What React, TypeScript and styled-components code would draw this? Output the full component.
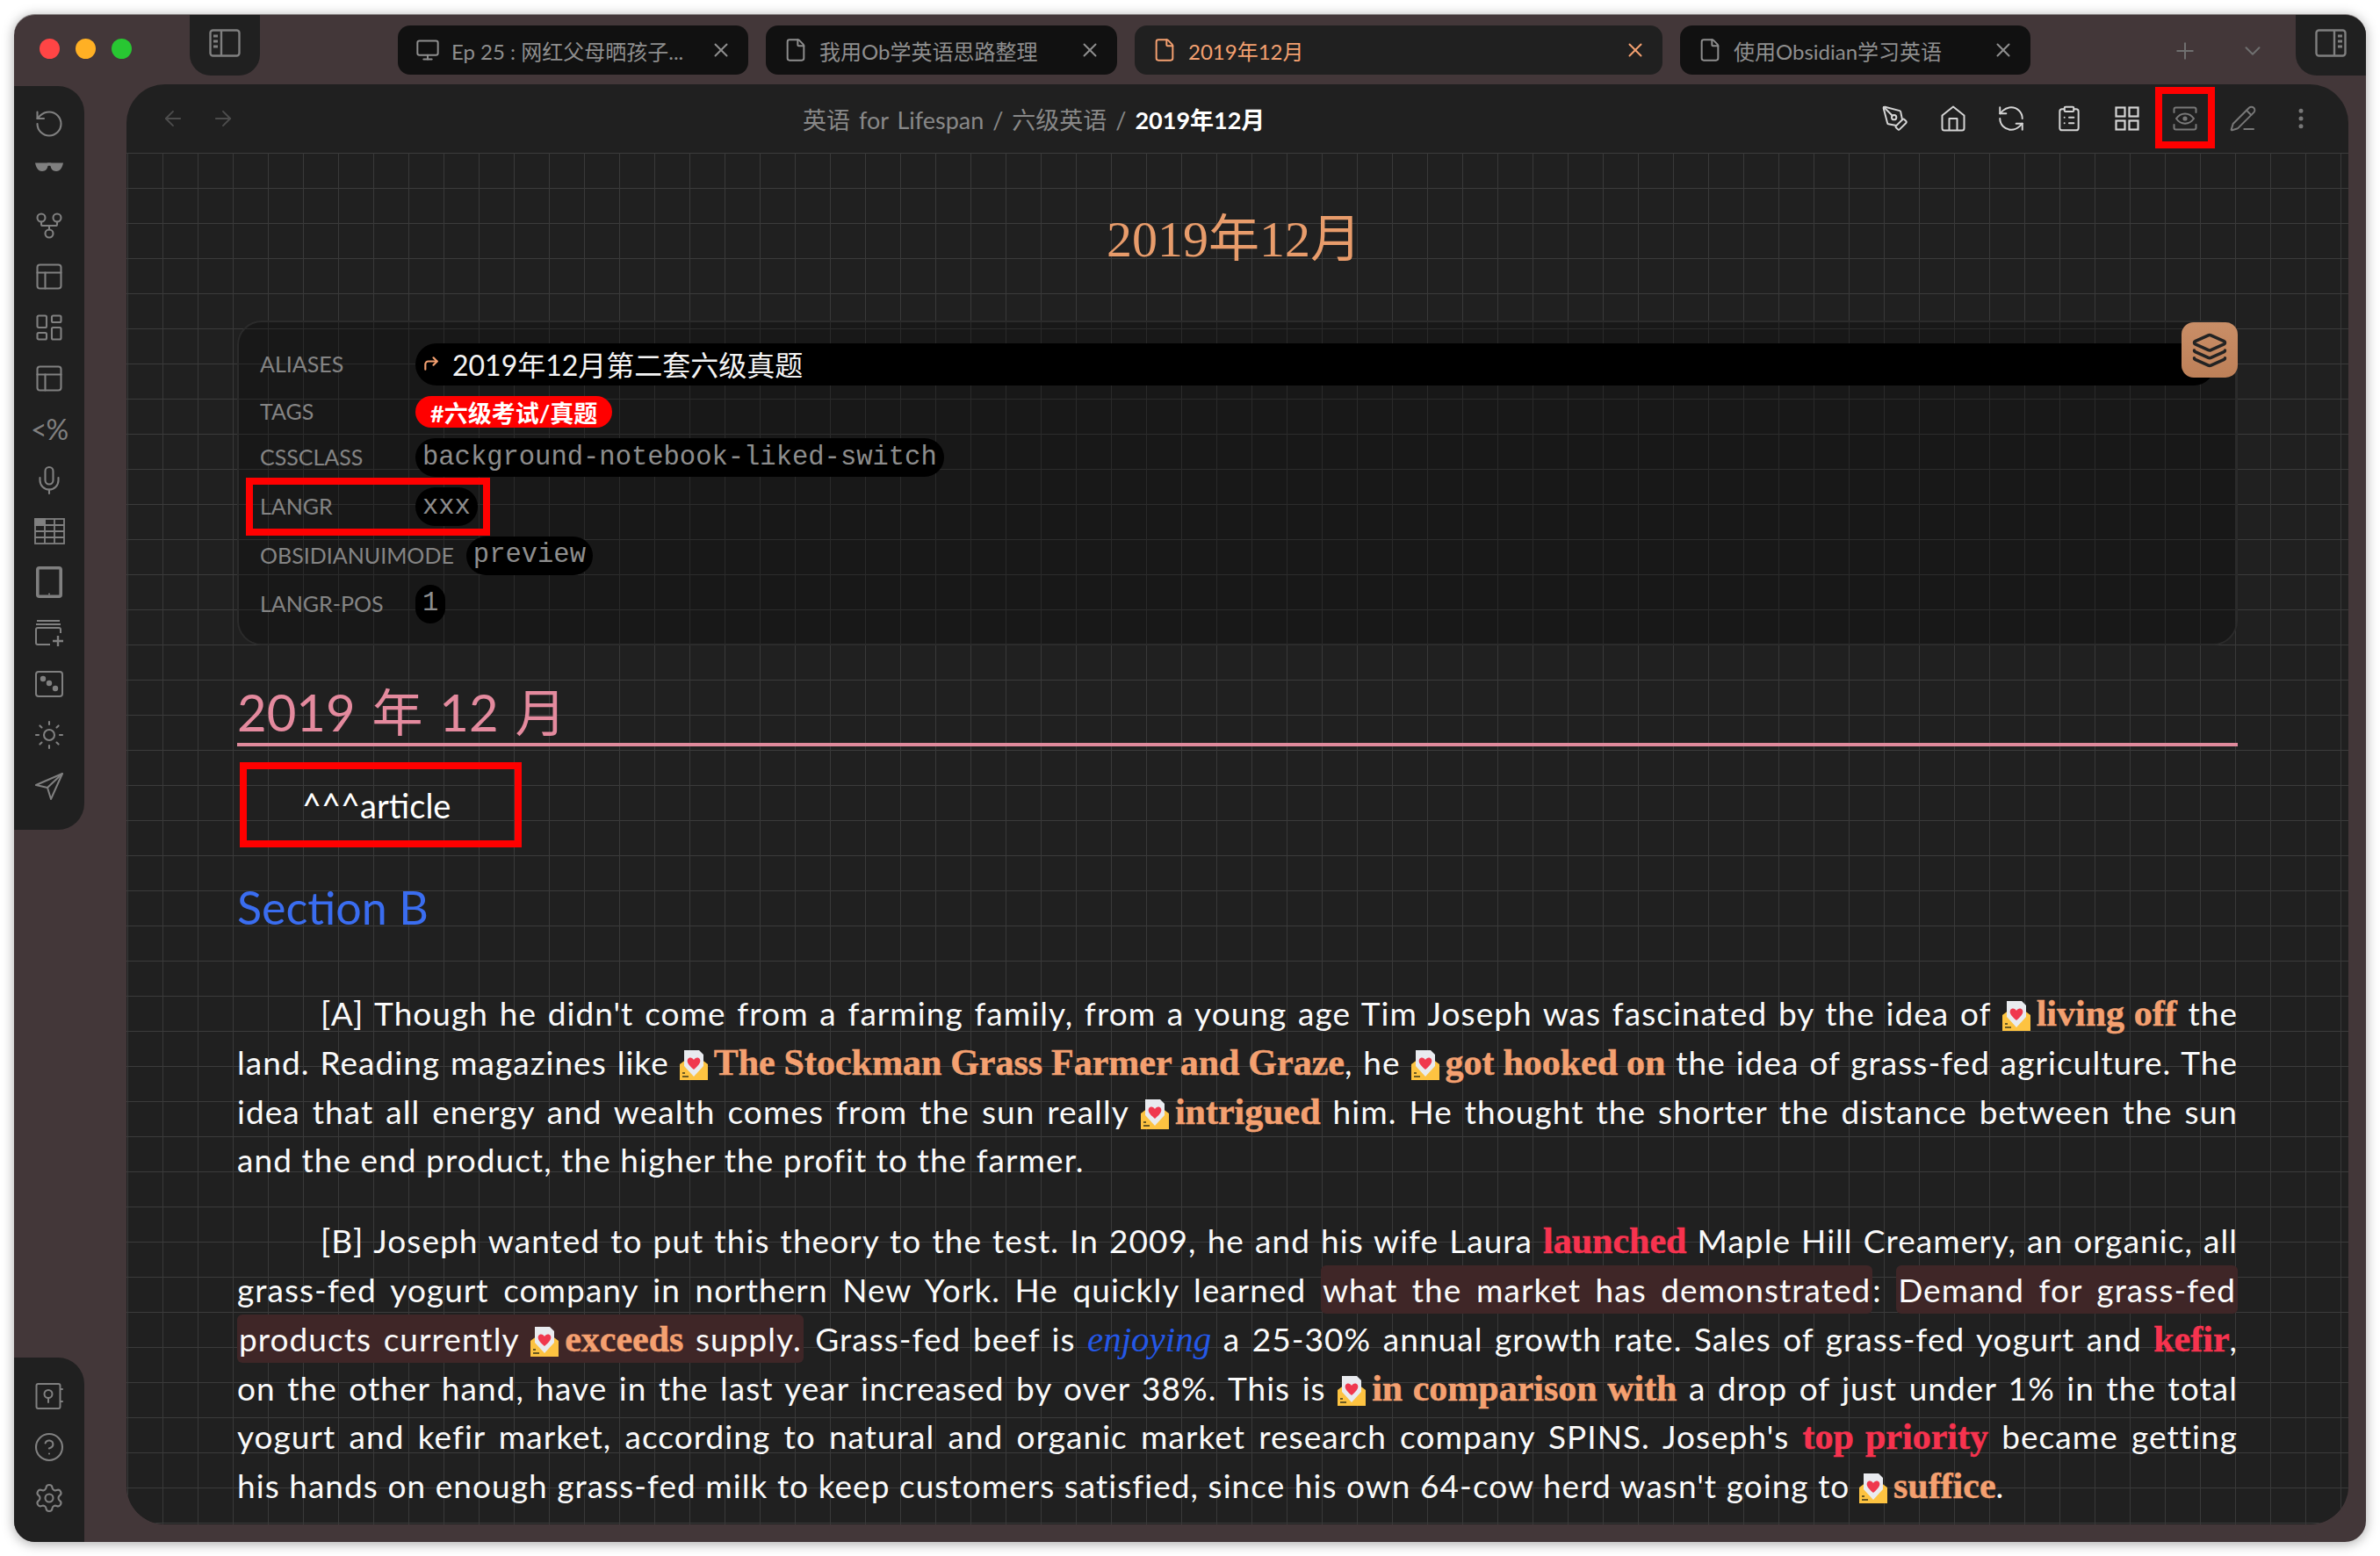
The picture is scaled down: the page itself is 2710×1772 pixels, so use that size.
import React from "react";
import styled, { createGlobalStyle } from "styled-components";
import {
  RotateCcw, GitFork, PanelsTopLeft, LayoutDashboard, Mic, Sun, Settings, CircleHelp,
  PenTool, RefreshCcw, ClipboardList, PencilLine, MoreVertical, ArrowLeft, ArrowRight,
  X, Plus, ChevronDown, Monitor, File, CornerUpRight, Layers,
} from "lucide-react";

const SANS = `Lato, "Noto Sans CJK SC", sans-serif`;
const BOLD_SERIF = `"Liberation Serif", "Noto Sans CJK SC", serif`;
const MONO = `"Liberation Mono", monospace`;

const GlobalStyle = createGlobalStyle`
  * { box-sizing: border-box; }
  html, body { margin: 0; padding: 0; background: #fff; }
  body { font-family: ${SANS}; }
`;

const Page = styled.div`
  width: 2710px;
  height: 1772px;
  padding: 16px;
  overflow: hidden;
  background: #fff;
`;

const Window = styled.div`
  width: 2678px;
  height: 1740px;
  display: flex;
  flex-direction: column;
  background: #433739;
  border-top: 1px solid #8b8686;
  border-radius: 24px;
  overflow: hidden;
  box-shadow: 0 2px 14px rgba(0, 0, 0, 0.35);
`;

/* title bar */
const TitleBar = styled.div`
  height: 79px;
  flex: none;
  display: flex;
  align-items: flex-start;
`;

const Lights = styled.div`
  width: 200px;
  height: 79px;
  padding: 0 0 0 29px;
  display: flex;
  align-items: center;
  gap: 18px;
  margin-top: -1px;
`;

const Light = styled.span<{ $c: string }>`
  width: 23px;
  height: 23px;
  border-radius: 50%;
  background: ${(p) => p.$c};
`;

const SideToggle = styled.div<{ $right?: boolean }>`
  width: 80px;
  height: 69px;
  flex: none;
  display: flex;
  align-items: center;
  justify-content: center;
  padding-bottom: 6px;
  background: #202020;
  color: #7f7f7f;
  border-radius: ${(p) => (p.$right ? "0 0 0 24px" : "0 0 24px 24px")};
  margin-left: ${(p) => (p.$right ? "auto" : "0")};
`;

const Tabs = styled.div`
  display: flex;
  gap: 20px;
  margin: 12px 0 0 157px;
`;

const Tab = styled.div<{ $w: number; $active?: boolean }>`
  width: ${(p) => p.$w}px;
  height: 56px;
  padding: 0 18px 0 20px;
  display: flex;
  align-items: center;
  border-radius: 14px;
  background: ${(p) => (p.$active ? "#202020" : "#111111")};
  color: ${(p) => (p.$active ? "#f4a070" : "#8e8e8e")};
  font-size: 24px;
  white-space: nowrap;
`;

const TabLabel = styled.span`
  margin-left: 13px;
  flex: 1;
`;

const TabTools = styled.div`
  display: flex;
  align-items: center;
  gap: 47px;
  margin: 26px 0 0 161px;
  color: #6f6f6f;
`;

/* body */
const Body = styled.div`
  flex: 1;
  min-height: 0;
  display: flex;
  padding-bottom: 20px;
`;

const RailColumn = styled.div`
  width: 80px;
  flex: none;
  margin-bottom: -20px;
  padding-top: 2px;
  display: flex;
  flex-direction: column;
  justify-content: space-between;
`;

const Rail = styled.div<{ $bottom?: boolean }>`
  display: flex;
  flex-direction: column;
  padding: ${(p) => (p.$bottom ? "15px 0 21px" : "14px 0 21px")};
  background: #202020;
  color: #808080;
  border-radius: ${(p) => (p.$bottom ? "0 30px 0 0" : "0 30px 30px 0")};
`;

const RailSlot = styled.div`
  height: 58px;
  display: flex;
  align-items: center;
  justify-content: center;
`;

const RailGlyph = styled.span`
  font-size: 32px;
  font-weight: 400;
  letter-spacing: -1px;
  line-height: 1;
`;

const Main = styled.main`
  width: 2530px;
  margin-left: 48px;
  display: flex;
  flex-direction: column;
  background: #202020;
  border-radius: 44px;
  overflow: hidden;
`;

const ViewHeader = styled.header`
  height: 78px;
  flex: none;
  display: flex;
  align-items: center;
`;

const NavGroup = styled.div`
  display: flex;
  gap: 29px;
  margin-left: 39px;
  color: #4c4c4c;
`;

const Crumbs = styled.div`
  margin-left: 646px;
  font-size: 27px;
  color: #888;
  white-space: nowrap;
  word-spacing: 3px;
`;

const CrumbCurrent = styled.span`
  color: #fff;
  font-weight: 700;
`;

const Actions = styled.div`
  display: flex;
  margin-left: auto;
  margin-right: 21px;
`;

const Action = styled.div<{ $dim?: boolean }>`
  position: relative;
  width: 66px;
  height: 78px;
  display: flex;
  align-items: center;
  justify-content: center;
  color: ${(p) => (p.$dim ? "#787878" : "#d4d4d4")};
`;

const ActionMark = styled.span`
  position: absolute;
  left: -1px;
  top: 3px;
  width: 68px;
  height: 70px;
  border: 8px solid #ff0000;
`;

const Scroller = styled.div`
  flex: 1;
  min-height: 0;
  overflow: hidden;
  padding: 0 126px 0 126px;
  background-color: #202020;
  background-image: linear-gradient(to right, #393939 1px, transparent 1px),
    linear-gradient(to bottom, #3b3b3b 1px, transparent 1px);
  background-size: 40px 40px;
  background-position: 1px 0;
`;

const NoteTitle = styled.h1`
  margin: 69px 0 0;
  height: 60px;
  font: 400 58px/60px "Liberation Serif", "Noto Sans CJK SC", serif;
  color: #e89c6b;
  text-align: center;
  padding-right: 8px;
`;

/* front matter */
const FrontMatter = styled.section`
  position: relative;
  height: 370px;
  margin-top: 62px;
  padding: 24px 26px 0;
  display: flex;
  flex-direction: column;
  gap: 12px;
  background: rgba(0, 0, 0, 0.25);
  border: 2px solid #2b2b2b;
  border-radius: 28px;
`;

const FieldRow = styled.div<{ $h: number }>`
  position: relative;
  height: ${(p) => p.$h}px;
  display: flex;
  align-items: center;
  margin-left: -2px;
`;

const FieldLabel = styled.span`
  min-width: 177px;
  padding: 0 14px 2px 0;
  font-size: 25px;
  color: #848484;
  text-transform: uppercase;
  white-space: nowrap;
`;

const AliasPill = styled.div`
  flex: 1;
  height: 48px;
  padding: 0 0 3px 8px;
  display: flex;
  align-items: center;
  gap: 14px;
  background: #000;
  border-radius: 24px;
  color: #f4f4f4;
  font-size: 32px;
  margin-right: -2px;
  svg { color: #f4a070; }
`;

const TagPill = styled.span`
  height: 36px;
  padding: 0 17px;
  display: flex;
  align-items: center;
  background: #ff0000;
  border-radius: 18px;
  color: #fff;
  font-size: 27px;
  font-weight: 700;
`;

const CodePill = styled.span`
  height: 44px;
  padding: 0 8px;
  display: flex;
  align-items: center;
  background: #000;
  border-radius: 22px;
  color: #8d8d8d;
  font: 400 30.5px/1 ${MONO};
`;

const RowMark = styled.span`
  position: absolute;
  left: -16px;
  top: -11px;
  width: 278px;
  height: 66px;
  border: 8px solid #ff0000;
`;

const LayerButton = styled.div`
  position: absolute;
  top: 0;
  right: -2px;
  width: 64px;
  height: 63px;
  display: flex;
  align-items: center;
  justify-content: center;
  border-radius: 14px;
  background: linear-gradient(180deg, #c98e67, #bd8058);
  color: #232323;
`;

/* note body */
const SectionHeading = styled.h2`
  height: 74px;
  margin: 41px 0 0;
  font: 400 58px/70px ${SANS};
  color: #e48a9e;
  border-bottom: 4px solid #e08a9c;
  word-spacing: 4px;
`;

const BlockRef = styled.div`
  width: 321px;
  height: 97px;
  margin: 18px 0 0 3px;
  padding-left: 63px;
  display: flex;
  align-items: center;
  border: 8px solid #ff0000;
  color: #fff;
  font-size: 38px;
`;

const SubHeading = styled.h3`
  margin: 35px 0 0;
  height: 66px;
  font: 400 52px/66px ${SANS};
  color: #3a6df0;
`;

const Para = styled.div<{ $first?: boolean }>`
  margin-top: ${(p) => (p.$first ? "60px" : "36px")};
`;

const Line = styled.div<{ $indent?: boolean; $last?: boolean }>`
  height: 55.8px;
  font-size: 37px;
  letter-spacing: 1.05px;
  line-height: 55.8px;
  color: #fafafa;
  white-space: nowrap;
  text-align: justify;
  text-align-last: ${(p) => (p.$last ? "left" : "justify")};
  padding-left: ${(p) => (p.$indent ? "95px" : "0")};
`;

const Key = styled.b<{ $tone: "orange" | "red" }>`
  font-family: ${BOLD_SERIF};
  font-size: 42px;
  font-weight: 700;
  letter-spacing: 0;
  word-spacing: -2px;
  -webkit-text-stroke: 0.5px currentColor;
  color: ${(p) => (p.$tone === "orange" ? "#f4a070" : "#f7334f")};
`;

const Emph = styled.i`
  font-family: ${BOLD_SERIF};
  font-size: 41px;
  letter-spacing: 0;
  color: #2458e8;
`;

const Mark = styled.span`
  background: #3f2627;
  border-radius: 6px;
  padding: 5px 2px;
`;

const MailIcon = styled.svg`
  width: 32px;
  height: 34px;
  margin-right: 7px;
  vertical-align: -6px;
`;

const Mail = () => (
  <MailIcon viewBox="0 0 32 34">
    <path d="M0 16 L8 10 L24 10 L32 16 V34 H0 Z" fill="#fdc341" />
    <path d="M5 0 H22 L27 5 V18 L16 30 L5 18 Z" fill="#e9ebef" />
    <path d="M16 22 C9 16 8 13 9 10.5 C10.5 7.5 14.5 8 16 11 C17.5 8 21.5 7.5 23 10.5 C24 13 23 16 16 22 Z" fill="#f0384e" />
    <rect x="3" y="25" width="3" height="2" fill="#6b5a22" />
    <rect x="3" y="29" width="7" height="2" fill="#6b5a22" />
  </MailIcon>
);

const PanelIcon = ({ right }: { right?: boolean }) => (
  <svg width="36" height="32" viewBox="0 0 36 32" fill="none" stroke="currentColor" strokeWidth="2.4" strokeLinejoin="round">
    <rect x="1.5" y="1.5" width="33" height="29" rx="3" />
    <path d={right ? "M22 1.5 V30.5" : "M14 1.5 V30.5"} />
    <path d={right ? "M26 8 H31 M26 14 H31 M26 20 H31" : "M5 8 H10 M5 14 H10 M5 20 H10"} strokeWidth="2.8" />
  </svg>
);

const Glasses = () => (
  <svg width="32" height="32" viewBox="0 0 32 32" fill="currentColor">
    <path d="M0 2.5 H13.5 C14.5 2 17.5 2 18.5 2.5 H32 C31 7 29 12 24 12 C20 12 18 9 17.5 6 C16.5 5.6 15.5 5.6 14.5 6 C14 9 12 12 8 12 C3 12 1 7 0 2.5 Z" />
  </svg>
);

const SheetIcon = () => (
  <svg width="35" height="30" viewBox="0 0 35 30" fill="none" stroke="currentColor" strokeWidth="1.8">
    <rect x="1" y="1" width="33" height="28" />
    <path d="M1 8 H34 M1 15 H34 M1 22 H34 M12 1 V29 M23 1 V29" />
    <rect x="1" y="1" width="11" height="7" fill="currentColor" />
  </svg>
);

const TabletIcon = () => (
  <svg width="30" height="36" viewBox="0 0 30 36" fill="none" stroke="currentColor" strokeWidth="3.6">
    <rect x="1.8" y="1.8" width="26.4" height="32.4" rx="2" />
    <circle cx="15" cy="31.5" r="1" fill="currentColor" stroke="none" />
  </svg>
);

const CardsPlus = () => (
  <svg width="34" height="32" viewBox="0 0 34 32" fill="none" stroke="currentColor" strokeWidth="2">
    <path d="M3 2 H29 M2 6 H30" />
    <path d="M30 16 V12 Q30 10 28 10 H4 Q2 10 2 12 V27 Q2 29 4 29 H18" />
    <path d="M27 19 V31 M21 25 H33" strokeWidth="2.4" />
  </svg>
);

const DiceIcon = () => (
  <svg width="32" height="30" viewBox="0 0 32 30" fill="none" stroke="currentColor" strokeWidth="2">
    <rect x="1" y="1" width="30" height="28" rx="3" />
    <circle cx="9" cy="9" r="2.2" fill="currentColor" />
    <circle cx="16" cy="14" r="2.2" fill="currentColor" />
    <circle cx="23" cy="20" r="2.2" fill="currentColor" />
  </svg>
);

const PlaneIcon = () => (
  <svg width="32" height="32" viewBox="0 0 32 32" fill="none" stroke="currentColor" strokeWidth="2" strokeLinejoin="round">
    <path d="M31 2 L1 15 L14 18 L18 31 Z" />
    <path d="M31 2 L14 18" />
  </svg>
);

const VaultIcon = () => (
  <svg width="32" height="32" viewBox="0 0 32 32" fill="none" stroke="currentColor" strokeWidth="2" strokeLinecap="round">
    <rect x="1.5" y="2" width="27" height="28" rx="2" />
    <circle cx="15" cy="13.5" r="4.5" />
    <path d="M15 18 V23 M29 8 H31 M29 22 H31" />
  </svg>
);

const HouseIcon = () => (
  <svg width="28" height="30" viewBox="0 0 28 30" fill="none" stroke="currentColor" strokeWidth="2" strokeLinejoin="round">
    <path d="M14 1.5 L26.5 11.5 V26 Q26.5 28.5 24 28.5 H4 Q1.5 28.5 1.5 26 V11.5 Z" />
    <path d="M9.5 28.5 V15 H18.5 V28.5" />
  </svg>
);

const GridIcon = () => (
  <svg width="28" height="28" viewBox="0 0 28 28" fill="none" stroke="currentColor" strokeWidth="2.2">
    <rect x="1.5" y="1.5" width="10" height="10" />
    <rect x="16.5" y="1.5" width="10" height="10" />
    <rect x="1.5" y="16.5" width="10" height="10" />
    <rect x="16.5" y="16.5" width="10" height="10" />
  </svg>
);

const EyeScanIcon = () => (
  <svg width="28" height="28" viewBox="0 0 28 28" fill="none" stroke="currentColor" strokeWidth="2" strokeLinecap="round">
    <path d="M1.5 7 V3.5 Q1.5 1.5 3.5 1.5 H24.5 Q26.5 1.5 26.5 3.5 V7" />
    <path d="M1.5 21 V24.5 Q1.5 26.5 3.5 26.5 H24.5 Q26.5 26.5 26.5 24.5 V21" />
    <path d="M4 14 C9 6.5 19 6.5 24 14 C19 21.5 9 21.5 4 14 Z" />
    <circle cx="14" cy="14" r="2.6" fill="currentColor" stroke="none" />
  </svg>
);

const railTop = [
  <RotateCcw size={36} strokeWidth={1.4} />,
  <Glasses />,
  <GitFork size={36} strokeWidth={1.4} />,
  <PanelsTopLeft size={36} strokeWidth={1.4} />,
  <LayoutDashboard size={36} strokeWidth={1.4} />,
  <PanelsTopLeft size={36} strokeWidth={1.4} />,
  <RailGlyph>{"<%"}</RailGlyph>,
  <Mic size={36} strokeWidth={1.4} />,
  <SheetIcon />,
  <TabletIcon />,
  <CardsPlus />,
  <DiceIcon />,
  <Sun size={36} strokeWidth={1.4} />,
  <PlaneIcon />,
];

export default function App() {
  return (
    <Page>
      <GlobalStyle />
      <Window>
        <TitleBar>
          <Lights>
            <Light $c="#ff4545" />
            <Light $c="#ffb024" />
            <Light $c="#28c732" />
          </Lights>
          <SideToggle><PanelIcon /></SideToggle>
          <Tabs>
            <Tab $w={399}>
              <Monitor size={28} strokeWidth={1.7} />
              <TabLabel>Ep 25 : 网红父母晒孩子...</TabLabel>
              <X size={26} strokeWidth={1.8} />
            </Tab>
            <Tab $w={400}>
              <File size={28} strokeWidth={1.7} />
              <TabLabel>我用Ob学英语思路整理</TabLabel>
              <X size={26} strokeWidth={1.8} />
            </Tab>
            <Tab $w={601} $active>
              <File size={28} strokeWidth={1.7} />
              <TabLabel>2019年12月</TabLabel>
              <X size={26} strokeWidth={1.8} />
            </Tab>
            <Tab $w={399}>
              <File size={28} strokeWidth={1.7} />
              <TabLabel>使用Obsidian学习英语</TabLabel>
              <X size={26} strokeWidth={1.8} />
            </Tab>
          </Tabs>
          <TabTools>
            <Plus size={30} strokeWidth={1.6} />
            <ChevronDown size={30} strokeWidth={1.6} />
          </TabTools>
          <SideToggle $right><PanelIcon right /></SideToggle>
        </TitleBar>
        <Body>
          <RailColumn>
            <Rail>
              {railTop.map((icon, i) => (
                <RailSlot key={i}>{icon}</RailSlot>
              ))}
            </Rail>
            <Rail $bottom>
              <RailSlot><VaultIcon /></RailSlot>
              <RailSlot><CircleHelp size={36} strokeWidth={1.4} /></RailSlot>
              <RailSlot><Settings size={36} strokeWidth={1.4} /></RailSlot>
            </Rail>
          </RailColumn>
          <Main>
            <ViewHeader>
              <NavGroup>
                <ArrowLeft size={28} strokeWidth={1.6} />
                <ArrowRight size={28} strokeWidth={1.6} />
              </NavGroup>
              <Crumbs>
                英语 for Lifespan / 六级英语 / <CrumbCurrent>2019年12月</CrumbCurrent>
              </Crumbs>
              <Actions>
                <Action><PenTool size={32} strokeWidth={1.5} /></Action>
                <Action><HouseIcon /></Action>
                <Action><RefreshCcw size={34} strokeWidth={1.4} /></Action>
                <Action><ClipboardList size={32} strokeWidth={1.5} /></Action>
                <Action><GridIcon /></Action>
                <Action $dim>
                  <EyeScanIcon />
                  <ActionMark />
                </Action>
                <Action $dim><PencilLine size={32} strokeWidth={1.5} /></Action>
                <Action $dim><MoreVertical size={30} strokeWidth={2} /></Action>
              </Actions>
            </ViewHeader>
            <Scroller>
              <NoteTitle>2019年12月</NoteTitle>
              <FrontMatter>
                <FieldRow $h={48}>
                  <FieldLabel>aliases</FieldLabel>
                  <AliasPill>
                    <CornerUpRight size={20} strokeWidth={2.6} />
                    2019年12月第二套六级真题
                  </AliasPill>
                </FieldRow>
                <FieldRow $h={36}>
                  <FieldLabel>tags</FieldLabel>
                  <TagPill>#六级考试/真题</TagPill>
                </FieldRow>
                <FieldRow $h={44}>
                  <FieldLabel>cssclass</FieldLabel>
                  <CodePill>background-notebook-liked-switch</CodePill>
                </FieldRow>
                <FieldRow $h={44}>
                  <FieldLabel>langr</FieldLabel>
                  <CodePill>xxx</CodePill>
                  <RowMark />
                </FieldRow>
                <FieldRow $h={43}>
                  <FieldLabel>obsidianuimode</FieldLabel>
                  <CodePill>preview</CodePill>
                </FieldRow>
                <FieldRow $h={43}>
                  <FieldLabel>langr-pos</FieldLabel>
                  <CodePill>1</CodePill>
                </FieldRow>
                <LayerButton><Layers size={42} strokeWidth={2} /></LayerButton>
              </FrontMatter>
              <SectionHeading>2019 年 12 月</SectionHeading>
              <BlockRef>^^^article</BlockRef>
              <SubHeading>Section B</SubHeading>
              <Para $first>
                <Line $indent>[A] Though he didn't come from a farming family, from a young age Tim Joseph was fascinated by the idea of <Mail /><Key $tone="orange">living off</Key> the</Line>
                <Line>land. Reading magazines like <Mail /><Key $tone="orange">The Stockman Grass Farmer and Graze</Key>, he <Mail /><Key $tone="orange">got hooked on</Key> the idea of grass-fed agriculture. The</Line>
                <Line>idea that all energy and wealth comes from the sun really <Mail /><Key $tone="orange">intrigued</Key> him. He thought the shorter the distance between the sun</Line>
                <Line $last>and the end product, the higher the profit to the farmer.</Line>
              </Para>
              <Para>
                <Line $indent>[B] Joseph wanted to put this theory to the test. In 2009, he and his wife Laura <Key $tone="red">launched</Key> Maple Hill Creamery, an organic, all</Line>
                <Line>grass-fed yogurt company in northern New York. He quickly learned <Mark>what the market has demonstrated</Mark>: <Mark>Demand for grass-fed</Mark></Line>
                <Line><Mark>products currently <Mail /><Key $tone="orange">exceeds</Key> supply.</Mark> Grass-fed beef is <Emph>enjoying</Emph> a 25-30% annual growth rate. Sales of grass-fed yogurt and <Key $tone="red">kefir</Key>,</Line>
                <Line>on the other hand, have in the last year increased by over 38%. This is <Mail /><Key $tone="orange">in comparison with</Key> a drop of just under 1% in the total</Line>
                <Line>yogurt and kefir market, according to natural and organic market research company SPINS. Joseph's <Key $tone="red">top priority</Key> became getting</Line>
                <Line $last>his hands on enough grass-fed milk to keep customers satisfied, since his own 64-cow herd wasn't going to <Mail /><Key $tone="orange">suffice</Key>.</Line>
              </Para>
            </Scroller>
          </Main>
        </Body>
      </Window>
    </Page>
  );
}
